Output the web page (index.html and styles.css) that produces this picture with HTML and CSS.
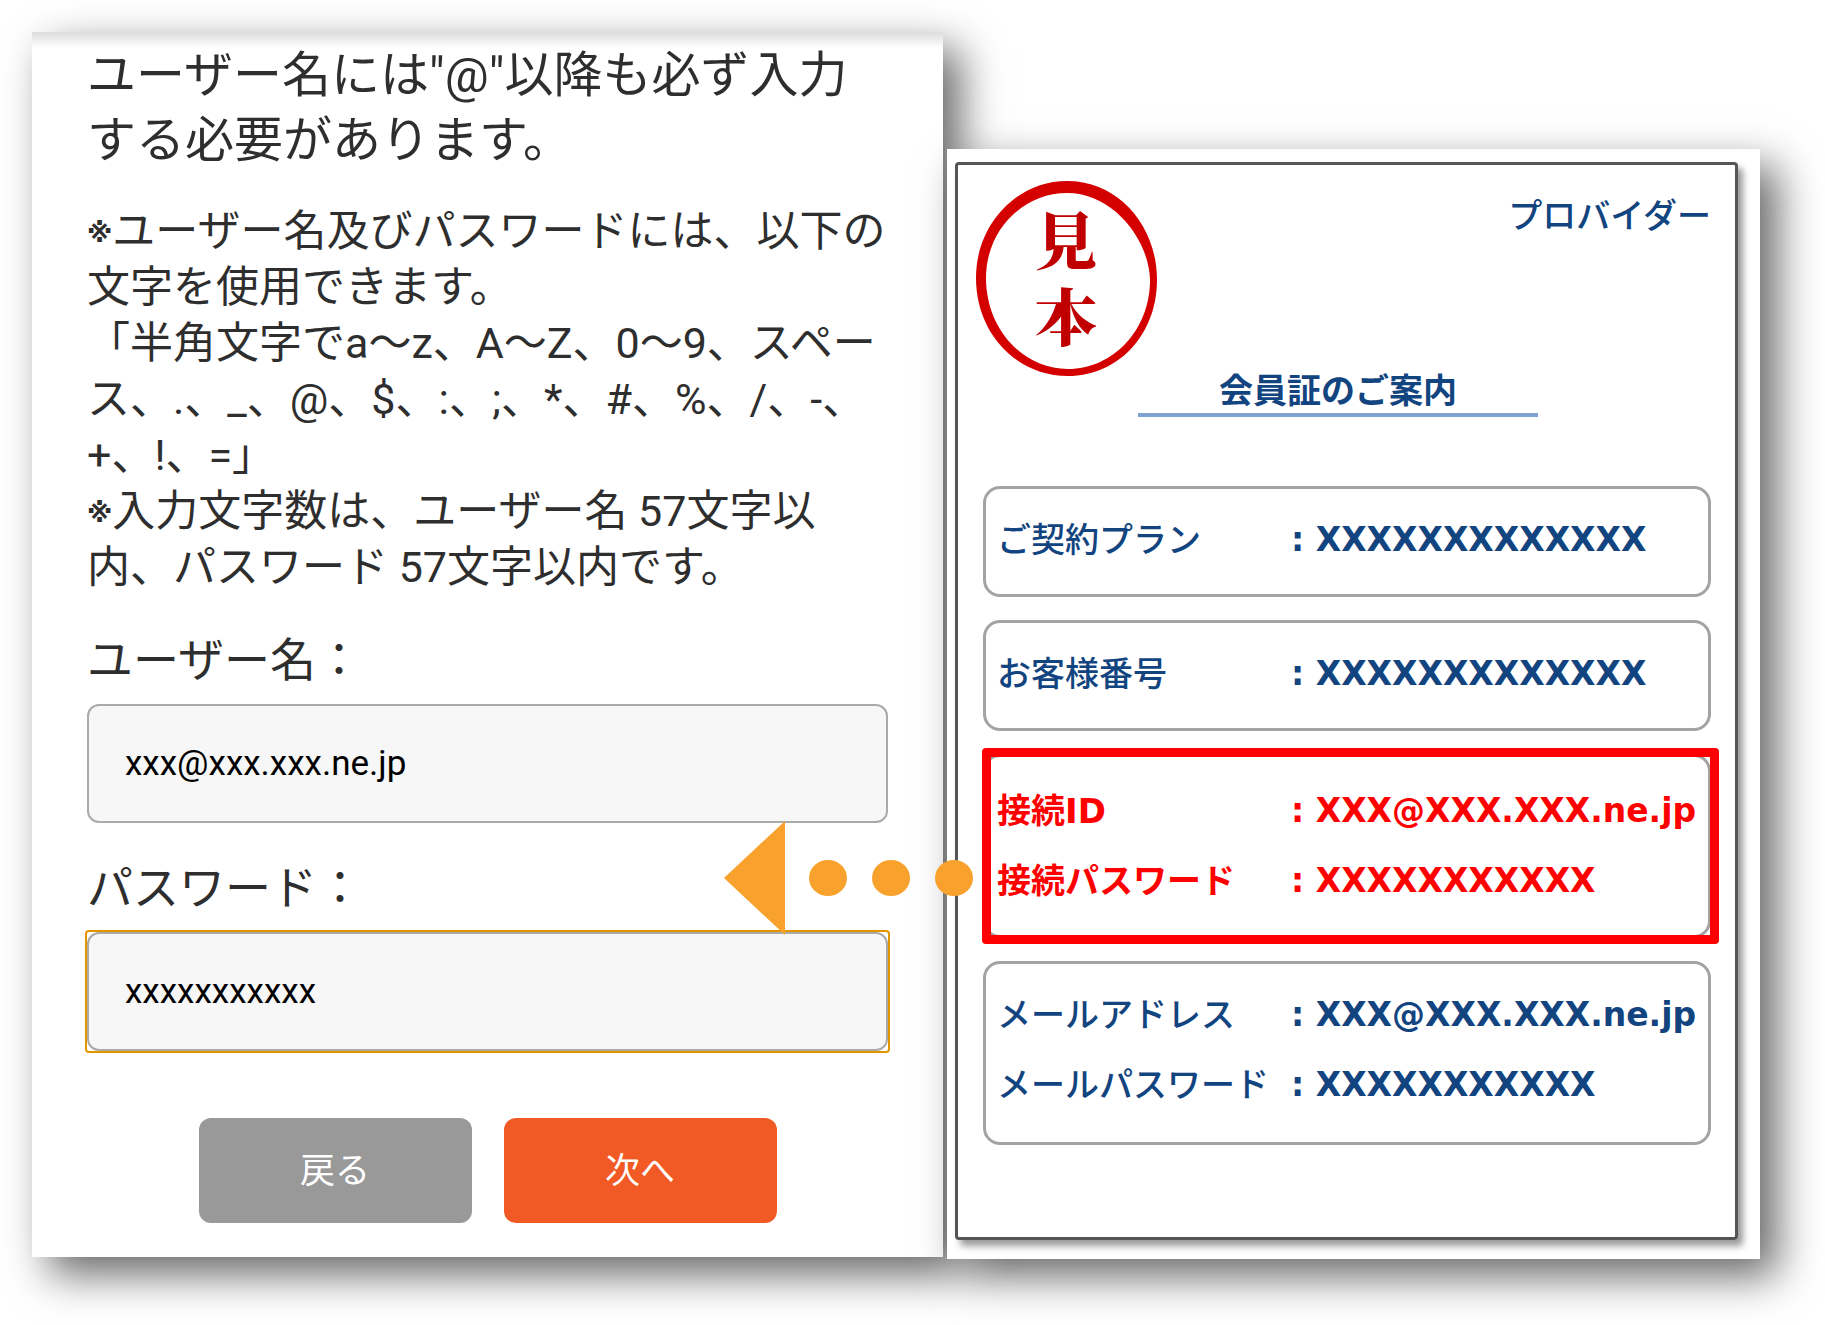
FILE: index.html
```html
<!DOCTYPE html>
<html lang="ja">
<head>
  <meta charset="UTF-8">
  <title>接続設定</title>
  <link rel="stylesheet" href="styles.css">
</head>
<body>
  <main class="page">
    <form class="setup">
      <h1 class="lead">ユーザー名には"@"以降も必ず入力<br>する必要があります。</h1>
      <p class="notes">
        <span class="mark">※</span>ユーザー名及びパスワードには、以下の<br>文字を使用できます。<br>
        「半角文字でa～z、A～Z、0～9、スペー<br>ス、.、_、@、$、:、;、*、#、%、/、-、<br>+、!、=」<br>
        <span class="mark">※</span>入力文字数は、ユーザー名 57文字以<br>内、パスワード 57文字以内です。
      </p>

      <div class="field">
        <label for="userName">ユーザー名：</label>
        <div class="box">
          <input type="text" id="userName" value="xxx@xxx.xxx.ne.jp">
        </div>
      </div>

      <div class="field">
        <label for="password">パスワード：</label>
        <div class="box active">
          <input type="text" id="password" value="xxxxxxxxxxx">
        </div>
        <!-- arrow from the member card to the form -->
        <svg class="arrow" viewBox="0 0 249 114" width="249" height="114">
          <path d="M0 57 L61 0 V114 Z"/>
          <ellipse cx="104" cy="57" rx="19" ry="18"/>
          <ellipse cx="167" cy="57" rx="19" ry="18"/>
          <ellipse cx="230" cy="57" rx="19" ry="18"/>
        </svg>
      </div>

      <div class="buttons">
        <button type="button" class="back">戻る</button>
        <button type="button" class="next">次へ</button>
      </div>
    </form>

    <section class="paper">
      <div class="card">
        <div class="card-head">
          <svg class="stamp" viewBox="0 0 181 195" width="181" height="195">
            <path fill-rule="evenodd" d="M91 0 C143 0 181 45 181 99 C181 153 143 195 92 195 C40 195 0 152 0 97 C0 43 41 0 91 0 Z M91 12 C47 12 10 49 10 97 C10 147 46 188 92 188 C137 188 174 149 174 99 C173 58 137 12 91 12 Z"/>
            <text y="84"><tspan x="90">見</tspan><tspan x="90" dy="76">本</tspan></text>
          </svg>
          <p class="provider">プロバイダー</p>
        </div>
        <h2 class="card-title">会員証のご案内</h2>

        <dl class="group">
          <dt>ご契約プラン</dt><dd>: XXXXXXXXXXXXX</dd>
        </dl>
        <dl class="group">
          <dt>お客様番号</dt><dd>: XXXXXXXXXXXXX</dd>
        </dl>
        <dl class="group highlight">
          <dt>接続ID</dt><dd>: XXX@XXX.XXX.ne.jp</dd>
          <dt>接続パスワード</dt><dd>: XXXXXXXXXXX</dd>
        </dl>
        <dl class="group mail">
          <dt>メールアドレス</dt><dd>: XXX@XXX.XXX.ne.jp</dd>
          <dt>メールパスワード</dt><dd>: XXXXXXXXXXX</dd>
        </dl>
      </div>
    </section>
  </main>
</body>
</html>
```
FILE: styles.css
```css
* {
  box-sizing: border-box;
}
body {
  margin: 0;
  background: #fff;
  color: #2e2e2e;
  font-family: Roboto, "Noto Sans CJK JP", sans-serif;
}
h1, h2, p, dl, dd {
  margin: 0;
  font-weight: normal;
}
.page {
  display: grid;
  grid-template-columns: minmax(0, 911fr) minmax(0, 813fr);
  align-items: start;
  gap: 4px;
  padding: 32px 65px 66px 32px;
}

/* left: setup form */
.setup {
  padding: 11px 55px 34px;
  background: linear-gradient(#dcdcdc, #fff 16px);
  box-shadow: 17px 17px 40px rgba(0, 0, 0, 0.6);
  white-space: nowrap;
}
.lead {
  font-size: 49px;
  line-height: 65px;
}
.notes {
  margin-top: 30px;
  font-size: 43px;
  line-height: 56px;
  text-spacing-trim: space-all;
}
.mark {
  font-family: "DejaVu Sans", sans-serif;
  font-size: 26px;
  font-weight: bold;
  line-height: 26px;
  vertical-align: 4px;
}
.field {
  position: relative;
  margin-top: 35px;
}
.field label {
  display: block;
  margin-bottom: 14px;
  font-size: 46px;
  line-height: 60px;
}
.field input {
  display: block;
  width: 100%;
  height: 119px;
  padding: 0 36px;
  border: 2px solid #aaa;
  border-radius: 12px;
  outline: none;
  background: #f7f7f7;
  color: #000;
  font-family: inherit;
  font-size: 35px;
}
.box {
  border-radius: 2px;
}
.box.active {
  outline: 2px solid #e39500;
}
.arrow {
  position: absolute;
  top: -37px;
  right: -85px;
  z-index: 1;
  fill: #f8a12d;
}
.buttons {
  display: flex;
  justify-content: center;
  gap: 32px;
  margin-top: 67px;
}
.buttons button {
  width: 273px;
  height: 105px;
  padding: 0 0 6px;
  border: 0;
  border-radius: 12px;
  color: #fff;
  font-family: inherit;
  font-size: 35px;
}
.back {
  background: #999;
}
.next {
  background: #f15a24;
}

/* right: sample member card */
.paper {
  margin-top: 117px;
  padding: 13px 22px 19px 8px;
  background: #fff;
  box-shadow: 17px 17px 40px rgba(0, 0, 0, 0.6);
}
.card {
  padding: 16px 24px 92px 25px;
  border: 3px solid #555;
  border-radius: 4px;
  box-shadow: 5px 6px 7px rgba(0, 0, 0, 0.4);
  color: #12447f;
  font-family: "DejaVu Sans", "Noto Sans CJK JP", sans-serif;
  font-size: 34px;
  line-height: 34px;
  white-space: nowrap;
}
.card-head {
  display: flex;
  justify-content: space-between;
  align-items: flex-start;
  margin-left: -7px;
}
.stamp {
  fill: #d40000;
}
.stamp text {
  fill: #c00000;
  font-family: "Noto Serif CJK JP", "Noto Sans CJK JP", serif;
  font-size: 62px;
  font-weight: 900;
  text-anchor: middle;
}
.provider {
  margin-top: 18px;
  font-weight: 500;
}
.card-title {
  width: 400px;
  margin: -2px auto 69px 155px;
  padding-bottom: 5px;
  border-bottom: 4px solid #7fa3d3;
  font-size: 34px;
  font-weight: bold;
  text-align: center;
}
.group {
  position: relative;
  display: grid;
  grid-template-columns: 294px 1fr;
  padding: 16px 0 19px 11px;
  border: 3px solid #a3a3a3;
  border-radius: 17px;
  line-height: 70px;
}
.group + .group {
  margin-top: 23px;
}
.group dt {
  font-weight: 500;
}
.group dd {
  font-size: 33px;
  font-weight: bold;
}
.group.highlight {
  padding-top: 19px;
  color: #f00;
}
.highlight dt {
  font-weight: bold;
}
.highlight::after {
  content: "";
  position: absolute;
  inset: -9px -11px -9px -4px;
  border: 9px solid #f00;
  border-radius: 4px;
}
.group.mail {
  padding-bottom: 22px;
}
```
